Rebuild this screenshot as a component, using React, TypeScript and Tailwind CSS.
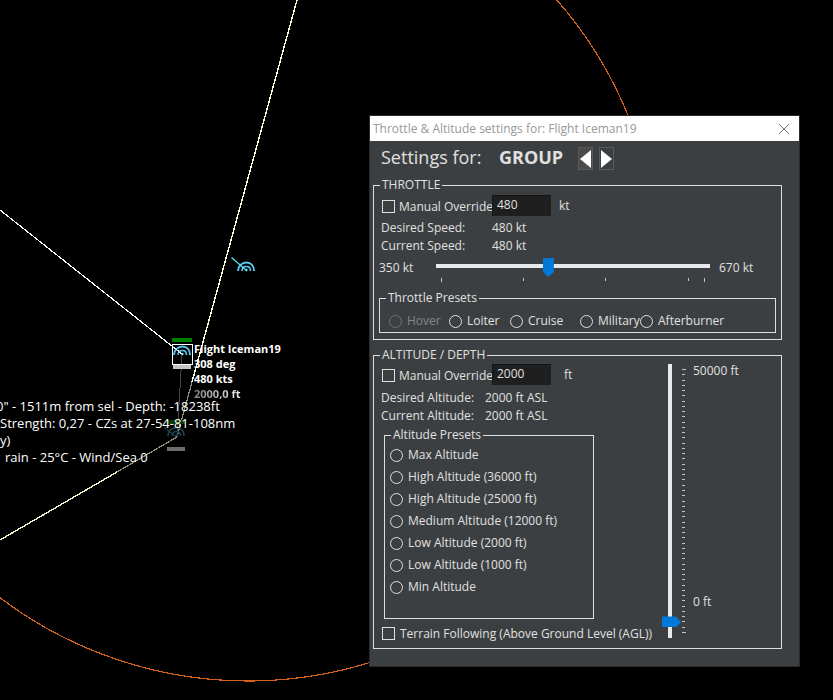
import React, { useState } from "react";

const THROTTLE_PRESETS = [
  { label: "Hover", width: "w-[60px]", disabled: true },
  { label: "Loiter", width: "w-[61px]" },
  { label: "Cruise", width: "w-[70px]" },
  { label: "Military", width: "w-[60px]" },
  { label: "Afterburner", width: "w-[90px]" },
];

const ALTITUDE_PRESETS = [
  "Max Altitude",
  "High Altitude (36000 ft)",
  "High Altitude (25000 ft)",
  "Medium Altitude (12000 ft)",
  "Low Altitude (2000 ft)",
  "Low Altitude (1000 ft)",
  "Min Altitude",
];

// Tick offsets along the sliders, measured from the start of the track
const SPEED_TICKS = [5, 87, 169, 252, 268];
const ALTITUDE_TICKS = Array.from({ length: 51 }, (_, i) => Math.round(5 + i * 5.26));

export default function App() {
  return (
    <main className="relative min-h-screen overflow-hidden bg-black font-['Open_Sans','Noto_Sans',sans-serif] text-[12px] text-[#e0e0e0]">
      <TacticalMap />
      <SettingsWindow />
    </main>
  );
}

function TacticalMap() {
  return (
    <div className="h-[700px] overflow-hidden">
      <svg width="833" height="700" viewBox="0 0 833 700" fill="none" shapeRendering="crispEdges">
        <circle cx="248" cy="270.5" r="410.5" stroke="#d2611c" strokeWidth="1.2" />
        <path d="M297 0 L192 382" stroke="#ffffd8" strokeWidth="1.4" />
        <path d="M192 382 L177 437 L117 472" stroke="#8f8f80" strokeWidth="1.2" />
        <path d="M117 472 L0 540" stroke="#f4f4d0" strokeWidth="1.4" />
        <path d="M0 210 L182 354" stroke="#fff" strokeWidth="1.2" />
        <path d="M182 355 L177 437" stroke="#444" />

        <rect x="172" y="338" width="20" height="4" fill="#008000" />
        <rect x="172.5" y="344.5" width="20" height="20" stroke="#fff" />
        <rect x="173" y="365" width="18" height="4" fill="#c4c4c4" />
        <rect x="167" y="420" width="18" height="4" fill="#0b3a0b" />
        <rect x="167" y="447" width="18" height="4" fill="#6e6e6e" />
      </svg>

      <svg className="absolute left-0 top-0" width="833" height="700" viewBox="0 0 833 700" fill="none">
        <AircraftMark x={246} y={271} color="#5cc8f0" />
        <path d="M231.500 257.500 L247 271" stroke="#4ee6ee" strokeWidth="1.2" />
        <AircraftMark x={182} y={355} color="#5cc8f0" />
        <path d="M172 346 L183 355" stroke="#e8ffff" />
        <AircraftMark x={176} y={436} color="#1b3d49" />
        <path d="M164 427 L176 437" stroke="#1b5a5f" />
      </svg>

      <div className="absolute left-[194px] top-[341px] text-[11px] font-bold leading-[15px] text-white">
        <p>Flight Iceman19</p>
        <p>308 deg</p>
        <p>480 kts</p>
        <p className="w-[52px] bg-linear-to-r from-[#858585] to-white bg-clip-text text-transparent">2000,0 ft</p>
      </div>

      <div className="absolute left-0 top-[398px] whitespace-pre text-[13px] leading-[17px] text-white">
        <p className="-ml-1">0" - 1511m from sel - Depth: -18238ft</p>
        <p>Strength: 0,27 - CZs at 27-54-81-108nm</p>
        <p>y)</p>
        <p className="pl-[5px]">rain - 25°C - Wind/Sea 0</p>
      </div>
    </div>
  );
}

function AircraftMark({ x, y, color }: { x: number; y: number; color: string }) {
  return (
    <g transform={`translate(${x} ${y})`} stroke={color} strokeWidth="2">
      <path d="M-8 0 C-8 -5 -4 -8.500 0.500 -8.500 S8 -5 8 0" />
      <path d="M-4 0 C-4 -3 -2 -4.500 0.500 -4.500 S4.500 -3 4.500 0" strokeWidth="1.6" />
      <path d="M0 0 L1 -2" />
    </g>
  );
}

function SettingsWindow() {
  const [speed, setSpeed] = useState(480);
  const [altitude, setAltitude] = useState(2000);

  return (
    <section
      aria-label="Throttle and altitude settings"
      className="absolute left-[369px] top-[115px] w-[431px] border border-[#2b2b2b] bg-[#3c3f41]"
    >
      <header className="flex h-[25px] items-center justify-between bg-white pl-[3px] pr-[9px]">
        <h1 className="text-[12px] text-[#999999]">Throttle &amp; Altitude settings for: Flight Iceman19</h1>
        <button type="button" aria-label="Close">
          <svg width="12" height="12" viewBox="0 0 12 12" stroke="#777">
            <path d="M1 1 L11 11 M11 1 L1 11" />
          </svg>
        </button>
      </header>

      <div className="flex h-[36px] items-start pl-[11px] pt-[6px] text-[18px] leading-[20px]">
        <span className="w-[118px]">Settings for:</span>
        <strong className="w-[79px]">GROUP</strong>
        <div className="flex gap-[6px]">
          <button type="button" aria-label="Previous" className="flex h-[23px] w-[15px] items-center justify-center border border-[#5a5a5a] bg-[#4b4b4b]">
            <svg width="11" height="18" viewBox="0 0 11 18"><path d="M11 0 V18 L0 9 Z" fill="#fff" /></svg>
          </button>
          <button type="button" aria-label="Next" className="flex h-[23px] w-[15px] items-center justify-center border border-[#5a5a5a]">
            <svg width="11" height="18" viewBox="0 0 11 18"><path d="M0 0 V18 L11 9 Z" fill="#fff" /></svg>
          </button>
        </div>
      </div>

      <div className="flex flex-col gap-[7px] pb-[17px] pl-[3px] pr-[17px]">
        <Group title="THROTTLE" className="pb-[6px]">
          <div className="pl-[7px] pt-[2px]">
            <OverrideRow id="speed" value={speed} onChange={setSpeed} unit="kt" unitClass="pl-[8px]" />
            <dl className="mt-[3px] grid grid-cols-[111px_1fr] leading-[18px]">
              <dt>Desired Speed:</dt>
              <dd>480 kt</dd>
              <dt>Current Speed:</dt>
              <dd>480 kt</dd>
            </dl>
          </div>

          <div className="mt-[1px] flex pl-[5px] leading-[24px]">
            <span className="w-[57px]">350 kt</span>
            <div className="w-[274px]">
              <input
                type="range"
                aria-label="Speed"
                min={350}
                max={670}
                value={speed}
                onChange={(e) => setSpeed(Number(e.target.value))}
                className="block h-[20px] w-full appearance-none bg-transparent [&::-webkit-slider-runnable-track]:h-[4px] [&::-webkit-slider-runnable-track]:bg-[#e7eaea] [&::-webkit-slider-thumb]:mt-[-6px] [&::-webkit-slider-thumb]:h-[19px] [&::-webkit-slider-thumb]:w-[11px] [&::-webkit-slider-thumb]:appearance-none [&::-webkit-slider-thumb]:bg-[#0078d7] [&::-webkit-slider-thumb]:[clip-path:polygon(0_0,100%_0,100%_74%,50%_100%,0_74%)]"
              />
              <svg className="mt-[2px] block" width="274" height="4" shapeRendering="crispEdges">
                {SPEED_TICKS.map((x, i) => (
                  <rect key={x} x={x} width="1" height={i % 4 === 0 ? 4 : 3} fill="#c4c4c4" />
                ))}
              </svg>
            </div>
            <span className="pl-[9px]">670 kt</span>
          </div>

          <Group title="Throttle Presets" className="ml-[5px] mr-[5px] mt-[8px]">
            <div className="flex pl-[9px] pt-[4px]">
              {THROTTLE_PRESETS.map((p) => (
                <div key={p.label} className={p.width}>
                  <Radio name="throttle" label={p.label} disabled={p.disabled} />
                </div>
              ))}
            </div>
          </Group>
        </Group>

        <Group title="ALTITUDE / DEPTH">
          <div className="flex">
            <div className="w-[294px] pl-[7px] pt-[1px]">
              <OverrideRow id="altitude" value={altitude} onChange={setAltitude} unit="ft" unitClass="pl-[13px]" />
              <dl className="mt-[4px] grid grid-cols-[104px_1fr] leading-[18px]">
                <dt>Desired Altitude:</dt>
                <dd>2000 ft ASL</dd>
                <dt>Current Altitude:</dt>
                <dd>2000 ft ASL</dd>
              </dl>
              <Group title="Altitude Presets" className="ml-[3px] mt-[2px] w-[210px] pb-[20px]">
                <div className="pl-[5px] pt-[1px]">
                  {ALTITUDE_PRESETS.map((label) => (
                    <Radio key={label} name="altitude" label={label} />
                  ))}
                </div>
              </Group>
              <label className="flex h-[29px] items-center gap-[5px] whitespace-nowrap pl-[1px]">
                <CheckBox />
                Terrain Following (Above Ground Level (AGL))
              </label>
            </div>

            <div className="flex pt-[1px]">
              <input
                type="range"
                aria-label="Altitude"
                min={0}
                max={50000}
                step={100}
                value={altitude}
                onChange={(e) => setAltitude(Number(e.target.value))}
                className="block h-[274px] w-[4px] appearance-none bg-transparent [direction:rtl] [writing-mode:vertical-lr] [&::-webkit-slider-runnable-track]:w-[4px] [&::-webkit-slider-runnable-track]:bg-[#e7eaea] [&::-webkit-slider-thumb]:ml-[-6px] [&::-webkit-slider-thumb]:h-[11px] [&::-webkit-slider-thumb]:w-[19px] [&::-webkit-slider-thumb]:appearance-none [&::-webkit-slider-thumb]:bg-[#0078d7] [&::-webkit-slider-thumb]:[clip-path:polygon(0_0,74%_0,100%_50%,74%_100%,0_100%)]"
              />
              <svg className="ml-[10px] block" width="4" height="274" shapeRendering="crispEdges">
                {ALTITUDE_TICKS.map((y, i) => (
                  <rect key={y} y={y} width={i % 50 === 0 ? 4 : 3} height="1" fill="#c4c4c4" />
                ))}
              </svg>
              <div className="flex h-[245px] flex-col justify-between pl-[7px] leading-[14px]">
                <span>50000 ft</span>
                <span>0 ft</span>
              </div>
            </div>
          </div>
        </Group>
      </div>
    </section>
  );
}

function Group({ title, className = "", children }: {
  title: string;
  className?: string;
  children: React.ReactNode;
}) {
  return (
    <fieldset className={`min-w-0 border border-[#dcdfe0] ${className}`}>
      <legend className="ml-[6px] px-[2px] leading-[16px]">{title}</legend>
      {children}
    </fieldset>
  );
}

function OverrideRow({ id, value, onChange, unit, unitClass }: {
  id: string;
  value: number;
  onChange: (value: number) => void;
  unit: string;
  unitClass: string;
}) {
  return (
    <div className="flex h-[21px] items-center pl-[1px]">
      <label className="flex w-[110px] items-center gap-[4px] whitespace-nowrap pt-[2px]">
        <CheckBox />
        Manual Override
      </label>
      <input
        id={id}
        type="text"
        aria-label={`Override value in ${unit}`}
        value={value}
        onChange={(e) => onChange(Number(e.target.value) || 0)}
        className="h-[21px] w-[59px] border-l border-t border-[#141414] bg-[#1f1f1f] pb-[3px] pl-[4px]"
      />
      <label htmlFor={id} className={unitClass}>{unit}</label>
    </div>
  );
}

function CheckBox() {
  return (
    <input
      type="checkbox"
      className="size-[13px] shrink-0 appearance-none border border-[#e0e0e0] checked:bg-[#0078d7]"
    />
  );
}

function Radio({ name, label, disabled = false }: { name: string; label: string; disabled?: boolean }) {
  return (
    <label className={`flex h-[22px] items-center gap-[5px] whitespace-nowrap ${disabled ? "text-[#858585]" : ""}`}>
      <input
        type="radio"
        name={name}
        disabled={disabled}
        className="size-[13px] shrink-0 appearance-none rounded-full border border-[#e0e0e0] checked:bg-[#0078d7] disabled:border-[#707070]"
      />
      {label}
    </label>
  );
}
